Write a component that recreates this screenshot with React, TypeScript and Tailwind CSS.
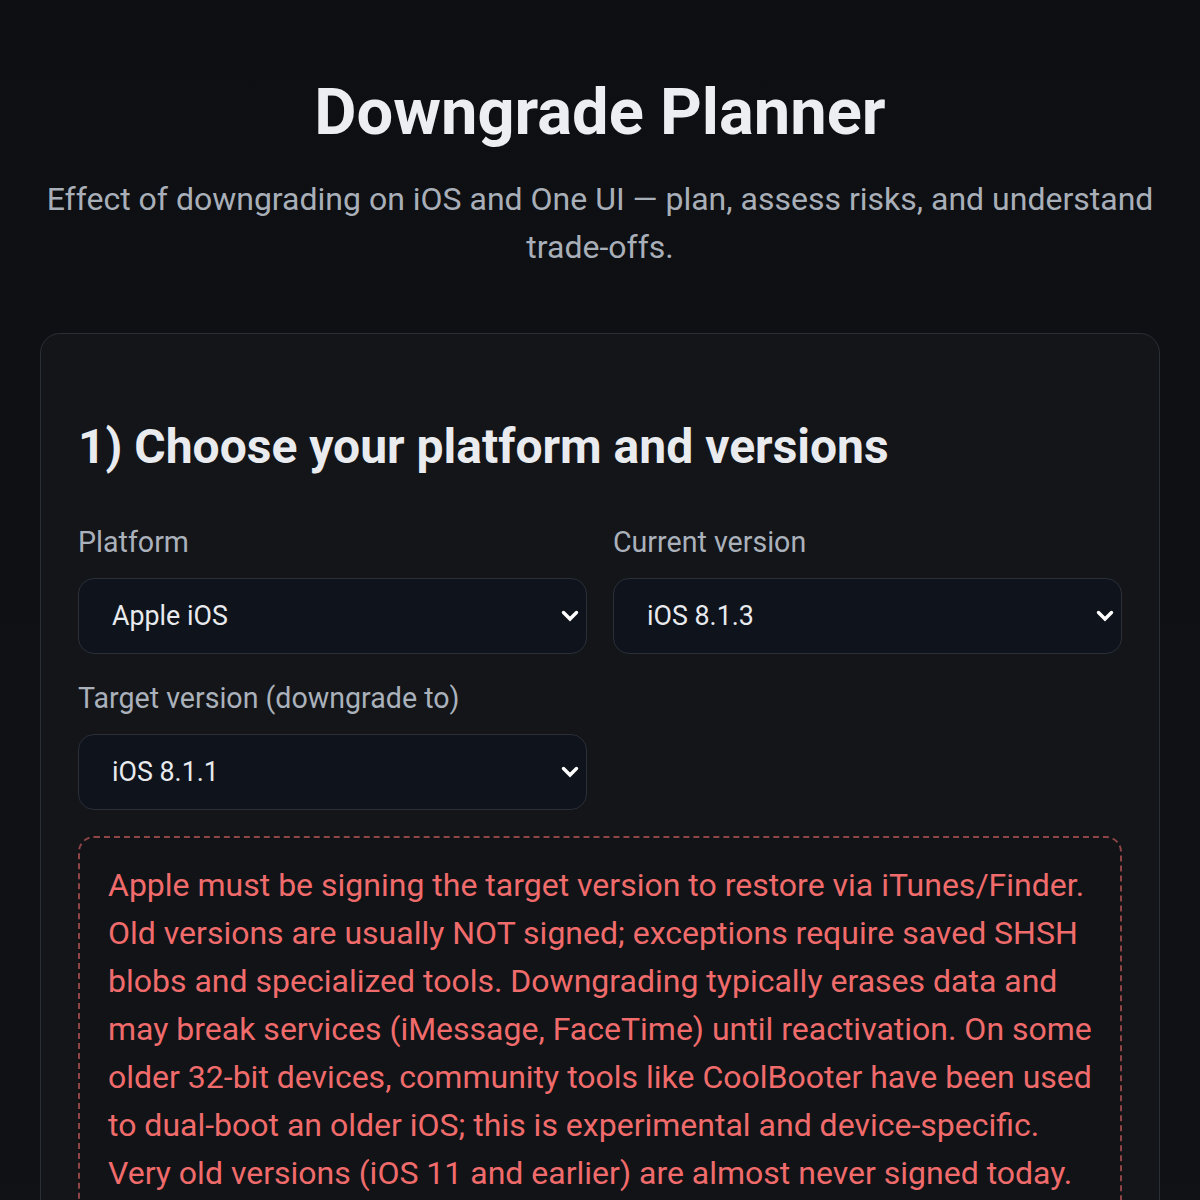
function Chevron() {
  return (
    <svg
      className="pointer-events-none absolute right-[8px] top-1/2 -translate-y-1/2"
      width="18"
      height="12"
      viewBox="0 0 18 12"
      fill="none"
    >
      <polyline points="2.5,2.5 9,9 15.5,2.5" stroke="#ffffff" strokeWidth="3.4" strokeLinecap="round" strokeLinejoin="miter" />
    </svg>
  )
}

function Field({ label, value }: { label: string; value: string }) {
  return (
    <label className="flex flex-col gap-[16px]">
      <span className="text-[28.6px] leading-[40px] text-[#aab1bb]">{label}</span>
      <div className="relative">
        <select
          defaultValue={value}
          className="h-[76px] w-full appearance-none rounded-2xl border border-[#2a2f38] bg-[#0f131b] pl-[33px] pr-12 text-[26.8px] text-[#e8eaee] outline-none"
        >
          <option>{value}</option>
        </select>
        <Chevron />
      </div>
    </label>
  )
}

export default function App() {
  return (
    <div
      className="min-h-[1200px] bg-gradient-to-b from-[#0d0f13] to-[#101216] px-10 pt-[76px] pb-16"
      style={{ fontFamily: "Roboto, 'Noto Sans', sans-serif" }}
    >
      <header className="text-center">
        <h1 className="text-[65px] font-bold leading-[72px] text-[#eceef1]">Downgrade Planner</h1>
        <p className="mx-auto mt-[27px] text-[32px] leading-[48px] text-[#a9afb8]">
          Effect of downgrading on iOS and One UI — plan, assess risks, and understand trade-offs.
        </p>
      </header>

      <section className="mt-[62px] rounded-[20px] border border-[#2a2e35] bg-[#131519] px-[37px] pt-[84px] pb-10">
        <h2 className="text-[48px] font-bold leading-[58px] text-[#e9ebef]">1) Choose your platform and versions</h2>

        <div className="mt-[46px] grid grid-cols-2 gap-x-[26px] gap-y-[24px]">
          <Field label="Platform" value="Apple iOS" />
          <Field label="Current version" value="iOS 8.1.3" />
          <Field label="Target version (downgrade to)" value="iOS 8.1.1" />
        </div>

        <div className="mt-[26px] rounded-2xl border-2 border-dashed border-[#8f4546] bg-[#111317] px-7 pt-[23px] pb-6 text-[32px] leading-[48px] text-[#f06b6b]">
          Apple must be signing the target version to restore via iTunes/Finder. Old versions are usually NOT signed;
          exceptions require saved SHSH blobs and specialized tools. Downgrading typically erases data and may break
          services (iMessage, FaceTime) until reactivation. On some older 32-bit devices, community tools like CoolBooter
          have been used to dual-boot an older iOS; this is experimental and device-specific. Very old versions (iOS 11 and
          earlier) are almost never signed today.
        </div>
      </section>
    </div>
  )
}
